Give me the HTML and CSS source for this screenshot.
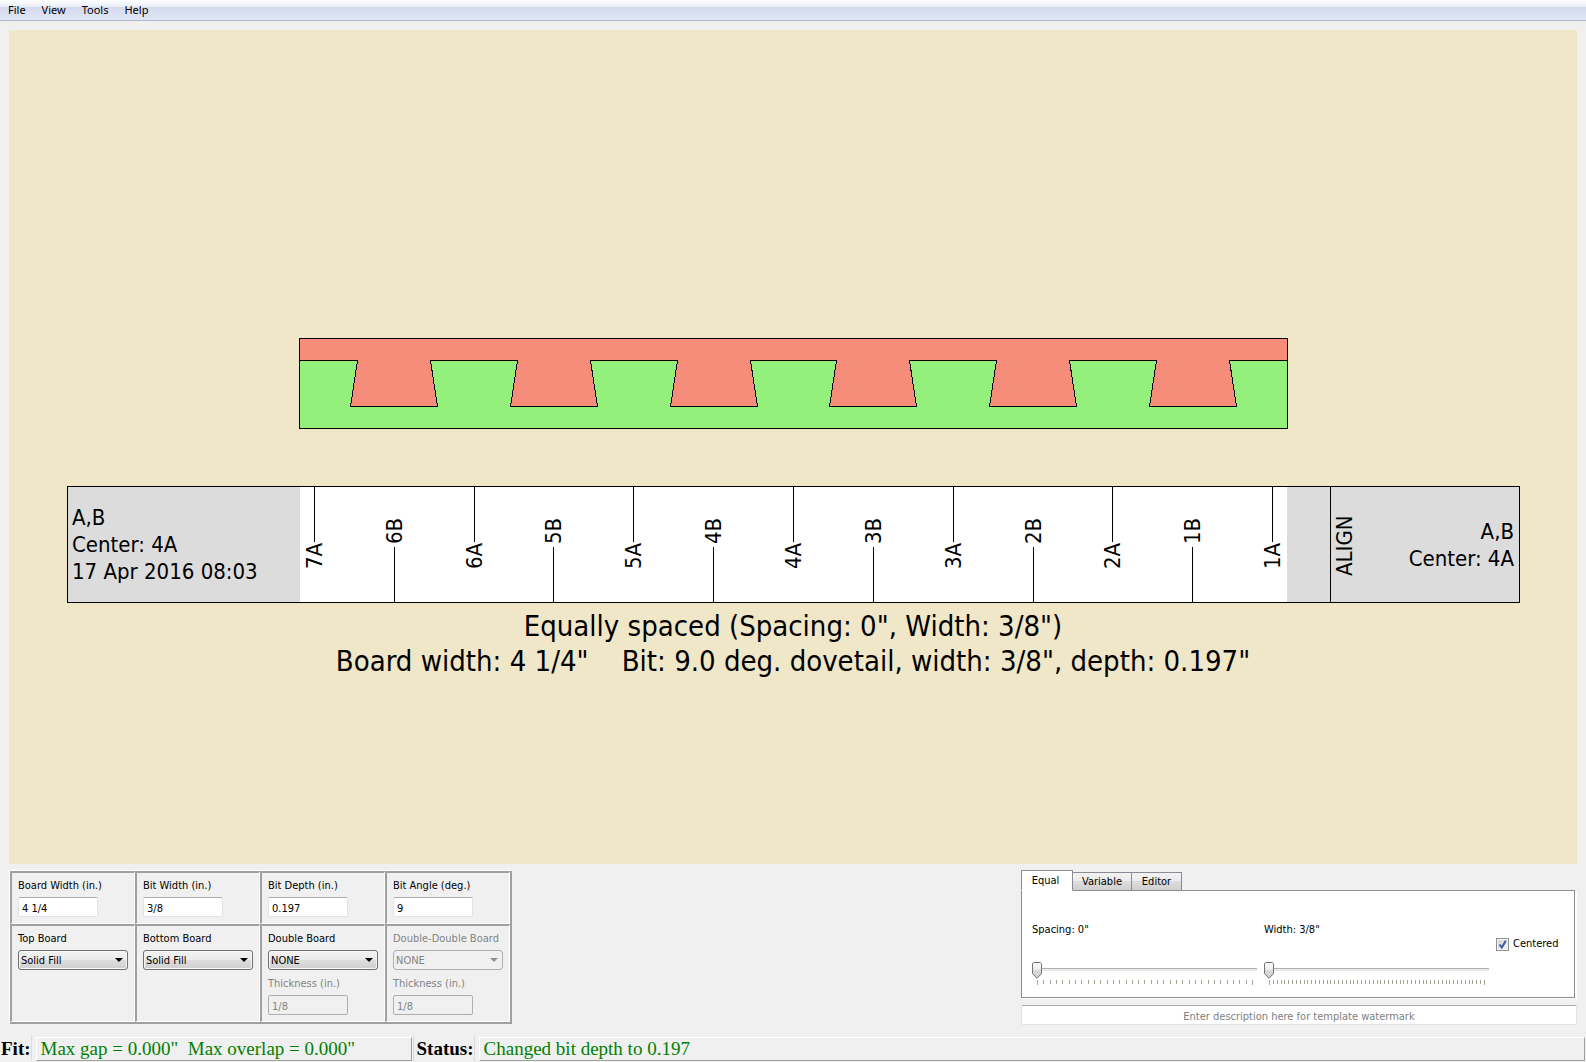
FILE: index.html
```html
<!DOCTYPE html>
<html lang="en">
<head>
<meta charset="utf-8">
<title>Dovetail Template</title>
<link rel="stylesheet" href="styles.css">
</head>
<body>
<nav class="menubar">
  <button type="button">File</button>
  <button type="button">View</button>
  <button type="button">Tools</button>
  <button type="button">Help</button>
</nav>

<main class="workspace">
  <svg class="canvas" viewBox="9 30 1568 834" role="img" aria-label="Joint and template preview">
    <!-- joint: top board over bottom board -->
    <g class="outline">
      <rect class="bottom-board" x="299.5" y="338.5" width="988" height="90"/>
      <path class="top-board" d="M299.5 338.5H1287.5V360.5H1229.5L1236.5 406.5H1149.5L1156.5 360.5H1069.5L1076.5 406.5H989.5L996.5 360.5H909.5L916.5 406.5H829.5L836.5 360.5H750.5L757.5 406.5H670.5L677.5 360.5H590.5L597.5 406.5H510.5L517.5 360.5H430.5L437.5 406.5H350.5L357.5 360.5H299.5Z"/>
    </g>

    <!-- router template strip -->
    <rect class="margin" x="67" y="486" width="1452" height="116"/>
    <rect class="strip" x="300" y="487" width="987" height="115"/>
    <g class="outline">
      <path class="rule" d="M67.5 486.5H1519.5V602.5H67.5ZM1330.5 486.5V602.5"/>
      <path class="rule" d="M314.5 487V542M474.5 487V542M633.5 487V542M793.5 487V542M953.5 487V542M1112.5 487V542M1272.5 487V542"/>
      <path class="rule" d="M394.5 547V602M553.5 547V602M713.5 547V602M873.5 547V602M1033.5 547V602M1192.5 547V602"/>
    </g>
    <g class="note">
      <text x="72" y="525">A,B</text>
      <text x="72" y="552">Center: 4A</text>
      <text x="72" y="579">17 Apr 2016 08:03</text>
      <text class="end" x="1514" y="539">A,B</text>
      <text class="end" x="1514" y="566">Center: 4A</text>
      <text transform="translate(1352 576) rotate(-90)">ALIGN</text>
    </g>
    <g class="note mid">
      <text transform="translate(322 556) rotate(-90)">7A</text>
      <text transform="translate(402 531) rotate(-90)">6B</text>
      <text transform="translate(482 556) rotate(-90)">6A</text>
      <text transform="translate(561 531) rotate(-90)">5B</text>
      <text transform="translate(641 556) rotate(-90)">5A</text>
      <text transform="translate(721 531) rotate(-90)">4B</text>
      <text transform="translate(801 556) rotate(-90)">4A</text>
      <text transform="translate(881 531) rotate(-90)">3B</text>
      <text transform="translate(961 556) rotate(-90)">3A</text>
      <text transform="translate(1041 531) rotate(-90)">2B</text>
      <text transform="translate(1120 556) rotate(-90)">2A</text>
      <text transform="translate(1200 531) rotate(-90)">1B</text>
      <text transform="translate(1280 556) rotate(-90)">1A</text>
    </g>
    <g class="caption">
      <text x="793" y="636">Equally spaced (Spacing: 0", Width: 3/8")</text>
      <text x="793" y="671">Board width: 4 1/4"&nbsp;&nbsp;&nbsp;&nbsp;Bit: 9.0 deg. dovetail, width: 3/8", depth: 0.197"</text>
    </g>
  </svg>

  <div class="controls">
    <form class="params">
      <div class="cell"><label for="bw">Board Width (in.)</label><input id="bw" type="text" value="4 1/4"></div>
      <div class="cell"><label for="bitw">Bit Width (in.)</label><input id="bitw" type="text" value="3/8"></div>
      <div class="cell"><label for="bitd">Bit Depth (in.)</label><input id="bitd" type="text" value="0.197"></div>
      <div class="cell"><label for="bita">Bit Angle (deg.)</label><input id="bita" type="text" value="9"></div>
      <div class="cell"><label for="top">Top Board</label><span class="combo"><select id="top"><option>Solid Fill</option></select></span></div>
      <div class="cell"><label for="bot">Bottom Board</label><span class="combo"><select id="bot"><option>Solid Fill</option></select></span></div>
      <div class="cell">
        <label for="dbl">Double Board</label><span class="combo"><select id="dbl"><option>NONE</option></select></span>
        <label class="off second" for="th1">Thickness (in.)</label><input id="th1" type="text" value="1/8" disabled>
      </div>
      <div class="cell">
        <label class="off" for="ddbl">Double-Double Board</label><span class="combo off"><select id="ddbl" disabled><option>NONE</option></select></span>
        <label class="off second" for="th2">Thickness (in.)</label><input id="th2" type="text" value="1/8" disabled>
      </div>
    </form>

    <section class="spacing">
      <div class="tabs" role="tablist">
        <button type="button" role="tab" aria-selected="true">Equal</button>
        <button type="button" role="tab" aria-selected="false" class="wide">Variable</button>
        <button type="button" role="tab" aria-selected="false">Editor</button>
      </div>
      <div class="panel">
        <div class="slider">
          <label for="sp">Spacing: 0"</label>
          <input id="sp" type="range" min="0" max="34" value="0">
          <svg class="ticks" viewBox="0 0 225 6" preserveAspectRatio="none" aria-hidden="true">
            <path class="minor" d="M5 2H221" stroke-dasharray="1 5.3235"/>
            <path class="major" d="M5.5 0V5M220.5 0V5"/>
          </svg>
        </div>
        <div class="slider">
          <label for="wd">Width: 3/8"</label>
          <input id="wd" type="range" min="0" max="56" value="0">
          <svg class="ticks" viewBox="0 0 225 6" preserveAspectRatio="none" aria-hidden="true">
            <path class="minor" d="M5 2H221" stroke-dasharray="1 2.8393"/>
            <path class="major" d="M5.5 0V5M220.5 0V5"/>
          </svg>
        </div>
        <label class="check"><input type="checkbox" checked>Centered</label>
      </div>
      <input class="describe" type="text" aria-label="Template description" placeholder="Enter description here for template watermark">
    </section>
  </div>
</main>

<footer class="statusbar">
  <label for="fit">Fit:</label>
  <output id="fit" class="fit">Max gap = 0.000"&nbsp; Max overlap = 0.000"</output>
  <label for="status" class="status-label">Status:</label>
  <output id="status" class="status">Changed bit depth to 0.197</output>
</footer>
</body>
</html>
```
FILE: styles.css
```css
* { box-sizing: border-box; }

body {
  margin: 0;
  background: #f0f0f0;
  color: #000;
  font: 11px/14px "DejaVu Sans Condensed", "DejaVu Sans", sans-serif;
}

button, input, select { font: inherit; color: inherit; margin: 0; }

/* menu bar */
.menubar {
  display: flex;
  height: 21px;
  border-bottom: 1px solid #b6bccc;
  background: linear-gradient(#fff 0, #e9edf6 7px, #d4daed 7px, #e1e6f6 100%);
}
.menubar button {
  padding: 0 8px;
  border: 0;
  background: none;
  font: 11px/20px "Noto Sans", "Open Sans", sans-serif;
}

/* drawing */
.workspace { padding: 9px 9px 0; }
.canvas { display: block; width: 100%; height: auto; background: #f0e6c8; }
.outline { shape-rendering: crispEdges; stroke: #000; stroke-width: 1; }
.bottom-board { fill: #92f07b; }
.top-board { fill: #f68d7a; }
.margin { fill: #dcdcdc; }
.strip { fill: #fff; }
.rule { fill: none; }
.note { font-size: 22px; }
.end { text-anchor: end; }
.mid, .caption { text-anchor: middle; }
.caption { font-size: 29px; }

/* bottom controls */
.controls {
  display: flex;
  justify-content: space-between;
  align-items: flex-start;
  padding-top: 6px;
}

.params {
  display: grid;
  grid-template-columns: repeat(4, 125px);
  margin: 1px 0 0 1px;
  border: solid #a0a0a0;
  border-width: 0 2px 2px 0;
  box-shadow: -1px -1px #fff;
}
.cell {
  display: flex;
  flex-direction: column;
  align-items: flex-start;
  padding: 6px 6px 6px;
  border-style: solid;
  border-width: 2px 1px 1px 2px;
  border-color: #a0a0a0 #fff #fff #a0a0a0;
}
.cell label { margin-bottom: 4px; white-space: nowrap; }
.cell .second { margin-top: 7px; }
.off { color: #838383; }

.cell input {
  width: 80px;
  height: 20px;
  padding: 2px 3px 0;
  border: 1px solid #e2e3ea;
  border-top-color: #abadb3;
  border-radius: 2px;
  background: #fff;
}
.cell input:disabled {
  border-color: #afafaf;
  background: #f0f0f0;
  color: #838383;
}

.combo { display: grid; width: 110px; }
.combo select {
  grid-area: 1 / 1;
  width: 100%;
  height: 20px;
  padding: 1px 2px 0;
  appearance: none;
  border: 1px solid #707070;
  border-radius: 3px;
  background: linear-gradient(#f2f2f2, #ebebeb 50%, #dddddd 50%, #cfcfcf);
  box-shadow: inset 0 0 0 1px #f7f7f7;
  opacity: 1;
}
.combo::after {
  content: "";
  grid-area: 1 / 1;
  place-self: center end;
  margin-right: 5px;
  border: 4px solid transparent;
  border-top-color: #000;
  border-bottom: 0;
  pointer-events: none;
}
.combo.off select { border-color: #afafaf; background: #f0f0f0; color: #838383; box-shadow: none; }
.combo.off::after { border-top-color: #909090; }

/* tabbed spacing panel */
.spacing { display: flex; flex-direction: column; flex: 0 1 556px; }
.tabs { display: flex; align-items: flex-end; margin-bottom: -1px; }
.tabs button {
  width: 50px;
  height: 19px;
  padding: 1px 0 0;
  border: 1px solid #898c95;
  border-left: 0;
  background: linear-gradient(#f2f2f2, #ebebeb 50%, #dddddd 50%, #cfcfcf);
}
.tabs .wide { width: 59px; }
.tabs button[aria-selected="true"] {
  position: relative;
  z-index: 1;
  width: 52px;
  height: 21px;
  padding-right: 3px;
  border-left: 1px solid #898c95;
  border-bottom-color: #fff;
  background: #fff;
}
.panel {
  display: flex;
  gap: 7px;
  margin-right: 2px;
  padding: 32px 10px 11px;
  border: 1px solid #898c95;
  background: #fff;
  box-shadow: 2px 1px #fff;
}
.slider { display: flex; flex-direction: column; flex: 0 1 225px; min-width: 0; }
.slider label { margin-bottom: 25px; }
.slider input {
  width: 100%;
  height: 17px;
  appearance: none;
  background: linear-gradient(#b0b0b0 1px, #e7eaea 1px) 5px 6px / 100% 3px no-repeat;
}
.slider input::-webkit-slider-thumb {
  appearance: none;
  width: 10px;
  height: 17px;
  background: url("data:image/svg+xml,%3Csvg xmlns='http://www.w3.org/2000/svg' width='10' height='17'%3E%3ClinearGradient id='g' x2='0' y2='1'%3E%3Cstop stop-color='%23fafafa'/%3E%3Cstop offset='.5' stop-color='%23ececec'/%3E%3Cstop offset='.5' stop-color='%23dadada'/%3E%3Cstop offset='1' stop-color='%23d0d0d0'/%3E%3C/linearGradient%3E%3Cpath d='M1.5.5h7l1 1v10l-4.500 4.800-4.500-4.800v-10z' fill='url(%23g)' stroke='%23707070'/%3E%3C/svg%3E");
}
.ticks { display: block; width: 100%; height: 6px; margin-top: 1px; shape-rendering: crispEdges; }
.minor { stroke: #a3a294; stroke-width: 4; }
.major { stroke: #a3a294; stroke-width: 1; }

.check { display: flex; align-items: center; align-self: flex-start; margin-top: 14px; white-space: nowrap; }
.check input {
  width: 13px;
  height: 13px;
  margin-right: 4px;
  appearance: none;
  border: 1px solid #8e8f8f;
  background: url("data:image/svg+xml,%3Csvg xmlns='http://www.w3.org/2000/svg' width='11' height='11'%3E%3Cpath d='M2.500 5.500l2.300 3L8.800 1.800' fill='none' stroke='%233f5aa0' stroke-width='2'/%3E%3C/svg%3E") center no-repeat, linear-gradient(135deg, #cdd2d8, #f6f6f6);
  box-shadow: inset 0 0 0 1px #f4f4f4;
}
.describe {
  height: 20px;
  margin-top: 7px;
  padding: 2px 4px 0;
  border: 1px solid #e2e3ea;
  border-top-color: #abadb3;
  border-radius: 2px;
  background: #fff;
  text-align: center;
}
.describe::placeholder { color: #808080; opacity: 1; }

/* status bar */
.statusbar {
  display: flex;
  align-items: stretch;
  height: 26px;
  margin-top: 11px;
  padding: 0 1px 1px 0;
  font: 19px/23px "Liberation Serif", serif;
}
.statusbar label {
  padding: 1px 0 0 1px;
  border-right: 1px solid #dcdcdc;
  font-weight: bold;
}
.statusbar .status-label { margin-left: 1px; padding-left: 3px; border-left: 1px solid #dcdcdc; }
.statusbar output {
  margin: 1px 0 0 4px;
  padding-left: 4px;
  border: 1px solid #a0a0a0;
  border-top-color: #fff;
  border-left-color: #fff;
  color: #008000;
  line-height: 21px;
  white-space: nowrap;
}
.fit { width: 376px; }
.status { flex: 1; }
```
